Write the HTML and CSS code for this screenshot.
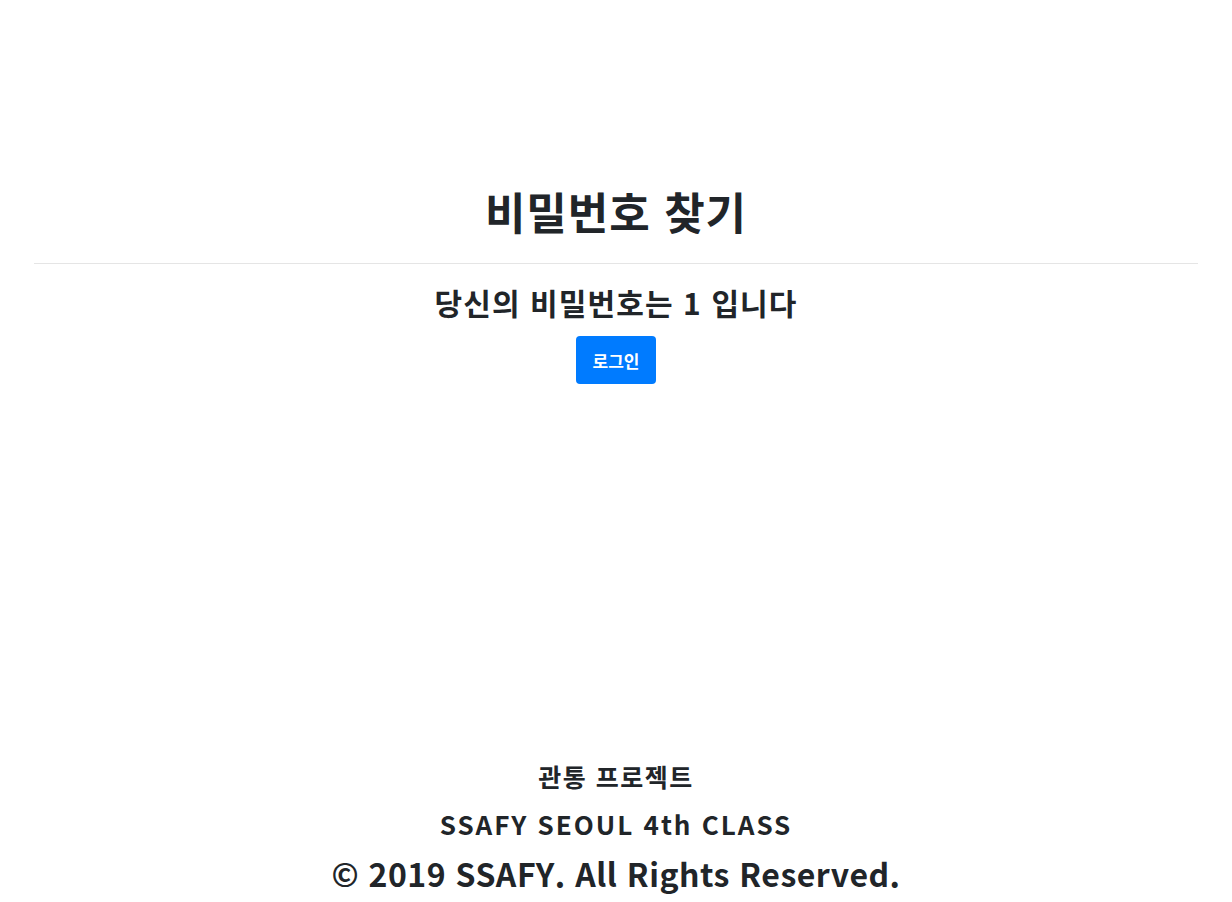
FILE: index.html
```html
<!DOCTYPE html>
<html lang="ko">
<head>
<meta charset="utf-8">
<title>비밀번호 찾기</title>
<link rel="stylesheet" href="styles.css">
</head>
<body>
<div class="page">
  <main class="main">
    <h1 class="title">비밀번호 찾기</h1>
    <hr class="rule">
    <h3 class="result">당신의 비밀번호는 1 입니다</h3>
    <button class="btn" type="button">로그인</button>
  </main>
  <footer class="footer">
    <div class="f1">관통 프로젝트</div>
    <div class="f2">SSAFY SEOUL 4th CLASS</div>
    <div class="f3">© 2019 SSAFY. All Rights Reserved.</div>
  </footer>
</div>
</body>
</html>
```

FILE: styles.css
```css
* { box-sizing: border-box; }
html, body { margin: 0; padding: 0; }
body {
  font-family: "Noto Sans CJK KR", "Noto Sans", sans-serif;
  color: #212529;
  background: #fff;
}
.page {
  min-height: 902px;
  display: flex;
  flex-direction: column;
}
.main {
  display: flex;
  flex-direction: column;
  align-items: center;
  padding: 0 34px;
}
.title {
  margin: 179px 0 0;
  font-size: 44px;
  font-weight: 700;
  line-height: 64px;
  letter-spacing: 1px;
}
.rule {
  align-self: stretch;
  border: 0;
  border-top: 1px solid #e5e5e5;
  margin: 20px 0 0;
}
.result {
  margin: 16px 0 0;
  font-size: 30px;
  font-weight: 700;
  line-height: 44px;
  letter-spacing: 1.1px;
}
.btn {
  margin-top: 12px;
  width: 80px;
  height: 48px;
  border: 0;
  border-radius: 4px;
  background: #007bff;
  color: #fff;
  font-family: inherit;
  font-size: 17px;
  font-weight: 700;
}
.footer {
  margin-top: auto;
  display: flex;
  flex-direction: column;
  align-items: center;
  padding-bottom: 4px;
  font-weight: 700;
}
.f1 { font-size: 25px; line-height: 48px; letter-spacing: 1.5px; }
.f2 { font-size: 26px; line-height: 48px; letter-spacing: 2px; }
.f3 { font-size: 32px; line-height: 50px; letter-spacing: 0.5px; }
```
